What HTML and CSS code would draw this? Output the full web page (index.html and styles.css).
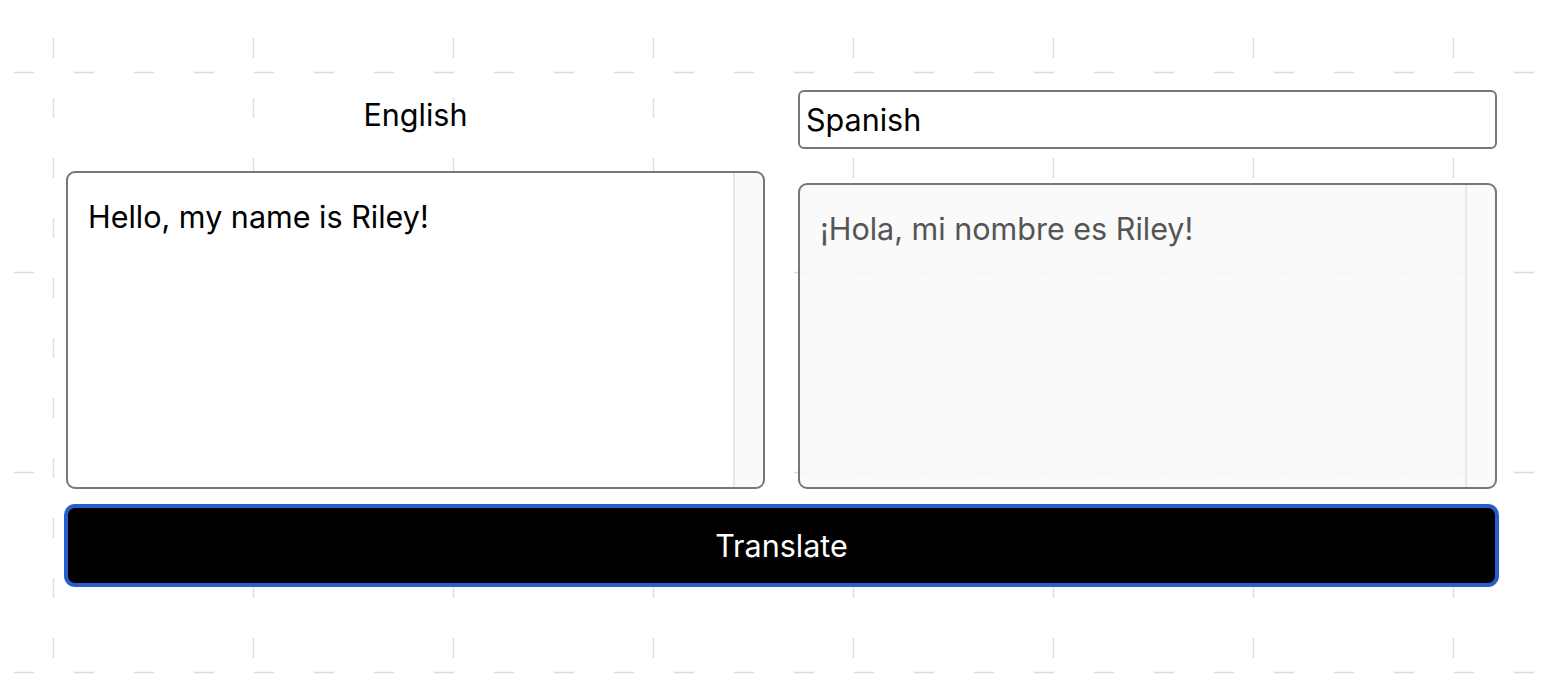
FILE: index.html
```html
<!DOCTYPE html>
<html lang="en">
<head>
<meta charset="utf-8">
<title>Translator</title>
<link rel="stylesheet" href="styles.css">
</head>
<body>
<main class="app">
  <div class="columns">
    <section class="col">
      <label class="lang-label" for="source">English</label>
      <textarea id="source" class="box box-source">Hello, my name is Riley!</textarea>
    </section>
    <section class="col">
      <select class="lang-select" aria-label="Target language">
        <option>Spanish</option>
      </select>
      <textarea class="box box-output" readonly>¡Hola, mi nombre es Riley!</textarea>
    </section>
  </div>
  <button class="translate" type="button">Translate</button>
</main>
</body>
</html>
```
FILE: styles.css
```css
html, body {
  margin: 0;
  padding: 0;
}

body {
  min-height: 692px;
  font-family: Inter, "Liberation Sans", Arial, sans-serif;
  font-size: 30.5px;
  color: #000;
  background-color: #fff;
  background-image: url("data:image/svg+xml,%3Csvg xmlns='http://www.w3.org/2000/svg' width='600' height='600'%3E%3Cg stroke='%23dcdcdc' stroke-width='1.4' fill='none'%3E%3Cpath d='M53.5 0V600M253.5 0V600M453.5 0V600' stroke-dasharray='20 40' stroke-dashoffset='22'/%3E%3Cpath d='M0 72.5H600M0 272.5H600M0 472.5H600' stroke-dasharray='20 40' stroke-dashoffset='46'/%3E%3C/g%3E%3C/svg%3E");
  background-repeat: repeat;
}

.app {
  padding: 90px 71px 0 66px;
}

.columns {
  display: grid;
  grid-template-columns: 1fr 1fr;
  column-gap: 33px;
}

.col {
  display: flex;
  flex-direction: column;
}

.lang-label {
  display: block;
  text-align: center;
  line-height: 36px;
  height: 36px;
  margin-top: 7px;
  margin-bottom: 38px;
}

.lang-select {
  appearance: none;
  -webkit-appearance: none;
  display: block;
  width: 100%;
  height: 59px;
  box-sizing: border-box;
  margin: 0 0 34px;
  padding: 0 6px;
  font: inherit;
  color: #000;
  background: #fff;
  border: 2px solid #777;
  border-radius: 6px;
}

.box {
  display: block;
  width: 100%;
  box-sizing: border-box;
  margin: 0;
  padding: 20px 50px 20px 20px;
  font: inherit;
  line-height: 48px;
  resize: none;
  border: 2px solid #777;
  border-radius: 9px;
  overflow: hidden;
  outline: none;
}

.box-source {
  height: 318px;
  color: #000;
  background:
    linear-gradient(to left, #fafafa 0 28px, #e8e8e8 28px 30px, transparent 30px) right top / 30px 100% no-repeat,
    #fff;
}

.box-output {
  height: 306px;
  color: #555;
  background:
    linear-gradient(to left, rgba(250, 250, 250, 0.9) 0 28px, #e8e8e8 28px 30px, transparent 30px) right top / 30px 100% no-repeat,
    rgba(249, 249, 249, 0.88);
}

.translate {
  display: block;
  width: calc(100% + 4px);
  height: 83px;
  margin: 15px -2px 0;
  padding: 0;
  box-sizing: border-box;
  font: inherit;
  color: #fff;
  background: #000;
  border: 4px solid #2a5dcc;
  border-radius: 11px;
  cursor: pointer;
}
```
